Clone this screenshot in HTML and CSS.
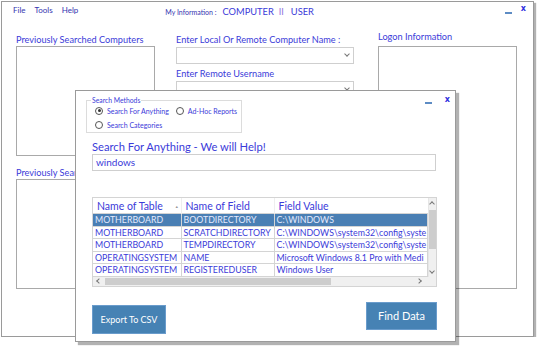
FILE: index.html
```html
<!DOCTYPE html>
<html lang="en">
<head>
    <meta charset="UTF-8">
    <title>My Information</title>
    <link rel="stylesheet" href="styles.css">
</head>
<body>
    <!-- main window -->
    <div class="window main-window">
        <div class="titlebar">
            <nav class="menu">
                <span>File</span>
                <span>Tools</span>
                <span>Help</span>
            </nav>
            <div class="myinfo">
                <span class="myinfo-label">My Information :</span>
                <span class="myinfo-value">COMPUTER</span>
                <span class="myinfo-sep">II</span>
                <span class="myinfo-value">USER</span>
            </div>
            <div class="win-ctrls">
                <span class="btn-min"></span>
                <span class="btn-close">x</span>
            </div>
        </div>

        <div class="panels">
            <div class="col col-side">
                <div class="field-label">Previously Searched Computers</div>
                <div class="listbox"></div>
                <div class="field-label second">Previously Searched Users</div>
                <div class="listbox"></div>
            </div>
            <div class="col col-mid">
                <div class="field-label">Enter Local Or Remote Computer Name :</div>
                <div class="combo"><span class="chev"></span></div>
                <div class="field-label second">Enter Remote Username</div>
                <div class="combo"><span class="chev"></span></div>
            </div>
            <div class="col col-side">
                <div class="field-label logon">Logon Information</div>
                <div class="listbox tall"></div>
            </div>
        </div>
    </div>

    <!-- search dialog -->
    <div class="window dialog">
        <div class="dlg-head">
            <fieldset class="methods">
                <legend>Search Methods</legend>
                <div class="radio-row">
                    <span class="radio checked"></span><span class="radio-text">Search For Anything</span>
                    <span class="radio"></span><span class="radio-text">Ad-Hoc Reports</span>
                </div>
                <div class="radio-row">
                    <span class="radio"></span><span class="radio-text">Search Categories</span>
                </div>
            </fieldset>
            <div class="win-ctrls dlg-ctrls">
                <span class="btn-min"></span>
                <span class="btn-close">x</span>
            </div>
        </div>

        <div class="search-title">Search For Anything - We will Help!</div>
        <div class="search-box">windows</div>

        <div class="grid">
            <div class="grid-body">
                <table class="results">
                    <colgroup>
                        <col class="c1"><col class="c2"><col class="c3">
                    </colgroup>
                    <thead>
                        <tr>
                            <th>Name of Table<span class="sort">&#9650;</span></th>
                            <th>Name of Field</th>
                            <th>Field Value</th>
                        </tr>
                    </thead>
                    <tbody>
                        <tr class="selected">
                            <td>MOTHERBOARD</td><td>BOOTDIRECTORY</td><td>C:\WINDOWS</td>
                        </tr>
                        <tr>
                            <td>MOTHERBOARD</td><td>SCRATCHDIRECTORY</td><td>C:\WINDOWS\system32\config\syste</td>
                        </tr>
                        <tr>
                            <td>MOTHERBOARD</td><td>TEMPDIRECTORY</td><td>C:\WINDOWS\system32\config\syste</td>
                        </tr>
                        <tr>
                            <td>OPERATINGSYSTEM</td><td>NAME</td><td>Microsoft Windows 8.1 Pro with Medi</td>
                        </tr>
                        <tr>
                            <td>OPERATINGSYSTEM</td><td>REGISTEREDUSER</td><td>Windows User</td>
                        </tr>
                    </tbody>
                </table>
                <div class="vscroll">
                    <span class="arrow up"></span>
                    <span class="vthumb"></span>
                    <span class="arrow down"></span>
                </div>
            </div>
            <div class="hscroll">
                <span class="arrow left"></span>
                <span class="hthumb"></span>
                <span class="arrow right"></span>
                <span class="corner"></span>
            </div>
        </div>

        <div class="actions">
            <button class="btn export">Export To CSV</button>
            <button class="btn find">Find Data</button>
        </div>
    </div>
</body>
</html>
```

FILE: styles.css
```css
:root {
    --text-blue: #3b3bd9;
    --menu-blue: #3434b0;
    --steel: #4682b4;
    --border-gray: #a9a9a9;
    --line-gray: #d4d4d4;
}

body {
    margin: 0;
    font-family: 'Lato', 'Noto Sans', sans-serif;
    color: var(--text-blue);
    background: #fff;
}

.window {
    background: #fff;
    border: 1px solid #9a9a9a;
    box-shadow: 2px 2px 1px rgba(0,0,0,0.3);
    box-sizing: border-box;
}

.main-window {
    margin: 1px 0 0 1px;
    width: 533px;
    height: 336px;
}

/* title bar */
.titlebar {
    display: flex;
    align-items: flex-start;
    height: 31px;
    padding: 0 0 0 11px;
}

.menu {
    display: flex;
    gap: 9px;
    font-size: 8px;
    color: var(--menu-blue);
    margin-top: 3px;
}

.myinfo {
    display: flex;
    align-items: baseline;
    margin: 4px 0 0 87px;
}

.myinfo-label {
    font-size: 7px;
    color: var(--menu-blue);
    margin-right: 6px;
}

.myinfo-value {
    font-size: 9.3px;
    color: var(--text-blue);
}

.myinfo-sep {
    font-size: 9px;
    color: #8f6fe0;
    margin: 0 7px 0 5px;
}

.win-ctrls {
    display: flex;
    align-items: flex-start;
    margin-left: auto;
    gap: 9px;
}

.btn-min {
    width: 7px;
    height: 2px;
    background: #5d8cc4;
    margin-top: 10px;
}

.btn-close {
    font-family: 'DejaVu Sans', sans-serif;
    font-weight: bold;
    font-size: 8px;
    color: #2f2fe0;
    line-height: 8px;
    margin: 3px 7px 0 0;
}

/* main panels */
.panels {
    display: flex;
    padding-left: 14px;
    gap: 21px;
}

.col {
    display: flex;
    flex-direction: column;
}

.col-side {
    width: 139px;
}

.col-mid {
    width: 178px;
    margin-right: 3px;
}

.field-label {
    font-size: 9.2px;
    line-height: 13px;
    white-space: nowrap;
}

.field-label.second {
    margin-top: 3px;
}

.col-side .field-label.second {
    margin-top: 10px;
}

.field-label.logon {
    margin-top: -3px;
    margin-bottom: 3px;
}

.listbox {
    height: 110px;
    border: 1px solid var(--border-gray);
    box-sizing: border-box;
}

.listbox.tall {
    height: 243px;
}

.combo {
    position: relative;
    height: 17px;
    border: 1px solid #cfcfcf;
    box-sizing: border-box;
    margin-top: 1px;
}

.chev {
    position: absolute;
    right: 4px;
    top: 4px;
    width: 3px;
    height: 3px;
    border-right: 1px solid #777;
    border-bottom: 1px solid #777;
    transform: rotate(45deg);
}

/* dialog */
.dialog {
    position: absolute;
    left: 75px;
    top: 90px;
    width: 381px;
    height: 252px;
    padding: 6px 19px 0 16px;
    box-shadow: 3px 3px 1px rgba(0,0,0,0.3);
}

.dlg-head {
    display: flex;
    align-items: flex-start;
}

.methods {
    width: 156px;
    min-width: 0;
    height: 36px;
    margin: 0 0 0 -6px;
    padding: 0 0 0 8px;
    border: 1px solid #dcdcdc;
    box-sizing: border-box;
}

.methods legend {
    font-size: 6.8px;
    padding: 0 1px;
    margin-left: -4px;
    line-height: 7px;
}

.radio-row {
    display: flex;
    align-items: center;
    height: 13px;
    font-size: 7px;
    white-space: nowrap;
}

.radio-row + .radio-row {
    margin-top: 1px;
}

.radio {
    flex-shrink: 0;
    width: 8px;
    height: 8px;
    border: 1px solid #555;
    border-radius: 50%;
    box-sizing: border-box;
    margin-right: 4px;
    position: relative;
}

.radio.checked::after {
    content: "";
    position: absolute;
    left: 1.5px;
    top: 1.5px;
    width: 3px;
    height: 3px;
    border-radius: 50%;
    background: #333;
}

.radio-text {
    margin-right: 7px;
}

.dlg-ctrls {
    gap: 13px;
    margin-right: -4px;
}

.dlg-ctrls .btn-min {
    margin-top: 5px;
}

.dlg-ctrls .btn-close {
    margin: -1px -10px 0 0;
}

.search-title {
    font-size: 11.2px;
    line-height: 15px;
    margin-top: 6px;
}

.search-box {
    height: 17px;
    border: 1px solid #cfcfcf;
    box-sizing: border-box;
    font-size: 10px;
    line-height: 15px;
    padding-left: 3px;
}

/* results grid */
.grid {
    margin-top: 26px;
    width: 345px;
    border: 1px solid var(--line-gray);
    box-sizing: border-box;
}

.grid-body {
    display: flex;
}

.results {
    width: 334px;
    table-layout: fixed;
    border-collapse: collapse;
    font-size: 8.8px;
}

.results .c1 { width: 88px; }
.results .c2 { width: 93px; }
.results .c3 { width: 153px; }

.results th {
    height: 15px;
    font-weight: normal;
    font-size: 10.5px;
    text-align: left;
    padding: 0 0 0 4px;
    border-left: 1px solid #eee;
    white-space: nowrap;
    overflow: hidden;
}

.results th:first-child {
    border-left: none;
}

.sort {
    font-size: 4px;
    color: #999;
    vertical-align: middle;
    margin-left: 12px;
}

.results td {
    height: 11.5px;
    padding: 0 0 0 2px;
    border: 1px solid var(--line-gray);
    white-space: nowrap;
    overflow: hidden;
    line-height: 11px;
}

.results td:first-child {
    border-left: none;
}

.results tr.selected td {
    background: #4a7fb4;
    color: #e4eaff;
}

.vscroll {
    width: 9px;
    background: #f0f0f0;
    display: flex;
    flex-direction: column;
    align-items: center;
    border-left: 1px solid #e6e6e6;
}

.arrow {
    display: block;
    flex-shrink: 0;
    width: 3px;
    height: 3px;
    border-right: 1px solid #777;
    border-bottom: 1px solid #777;
}

.arrow.up {
    margin-top: 4px;
    transform: rotate(-135deg);
}

.arrow.down {
    margin: auto 0 4px;
    transform: rotate(45deg);
}

.arrow.left {
    margin: 0 4px 0 4px;
    transform: rotate(135deg);
}

.arrow.right {
    margin-right: 6px;
    transform: rotate(-45deg);
}

.vthumb {
    width: 7px;
    height: 39px;
    margin-top: 4px;
    background: #cdcdcd;
}

.hscroll {
    display: flex;
    align-items: center;
    height: 9px;
    background: #f0f0f0;
}

.hthumb {
    width: 226px;
    height: 7px;
    background: #cdcdcd;
    margin-right: auto;
}

.corner {
    width: 9px;
    height: 9px;
}

/* buttons */
.actions {
    display: flex;
    justify-content: space-between;
    align-items: flex-start;
    width: 345px;
}

.btn {
    font-family: inherit;
    background: var(--steel);
    color: #fff;
    border: 1px solid #6a9ccc;
    cursor: pointer;
}

.btn.export {
    width: 74px;
    height: 29px;
    font-size: 9px;
    margin-top: 18px;
}

.btn.find {
    width: 71px;
    height: 28px;
    font-size: 11px;
    margin-top: 15px;
}
```
